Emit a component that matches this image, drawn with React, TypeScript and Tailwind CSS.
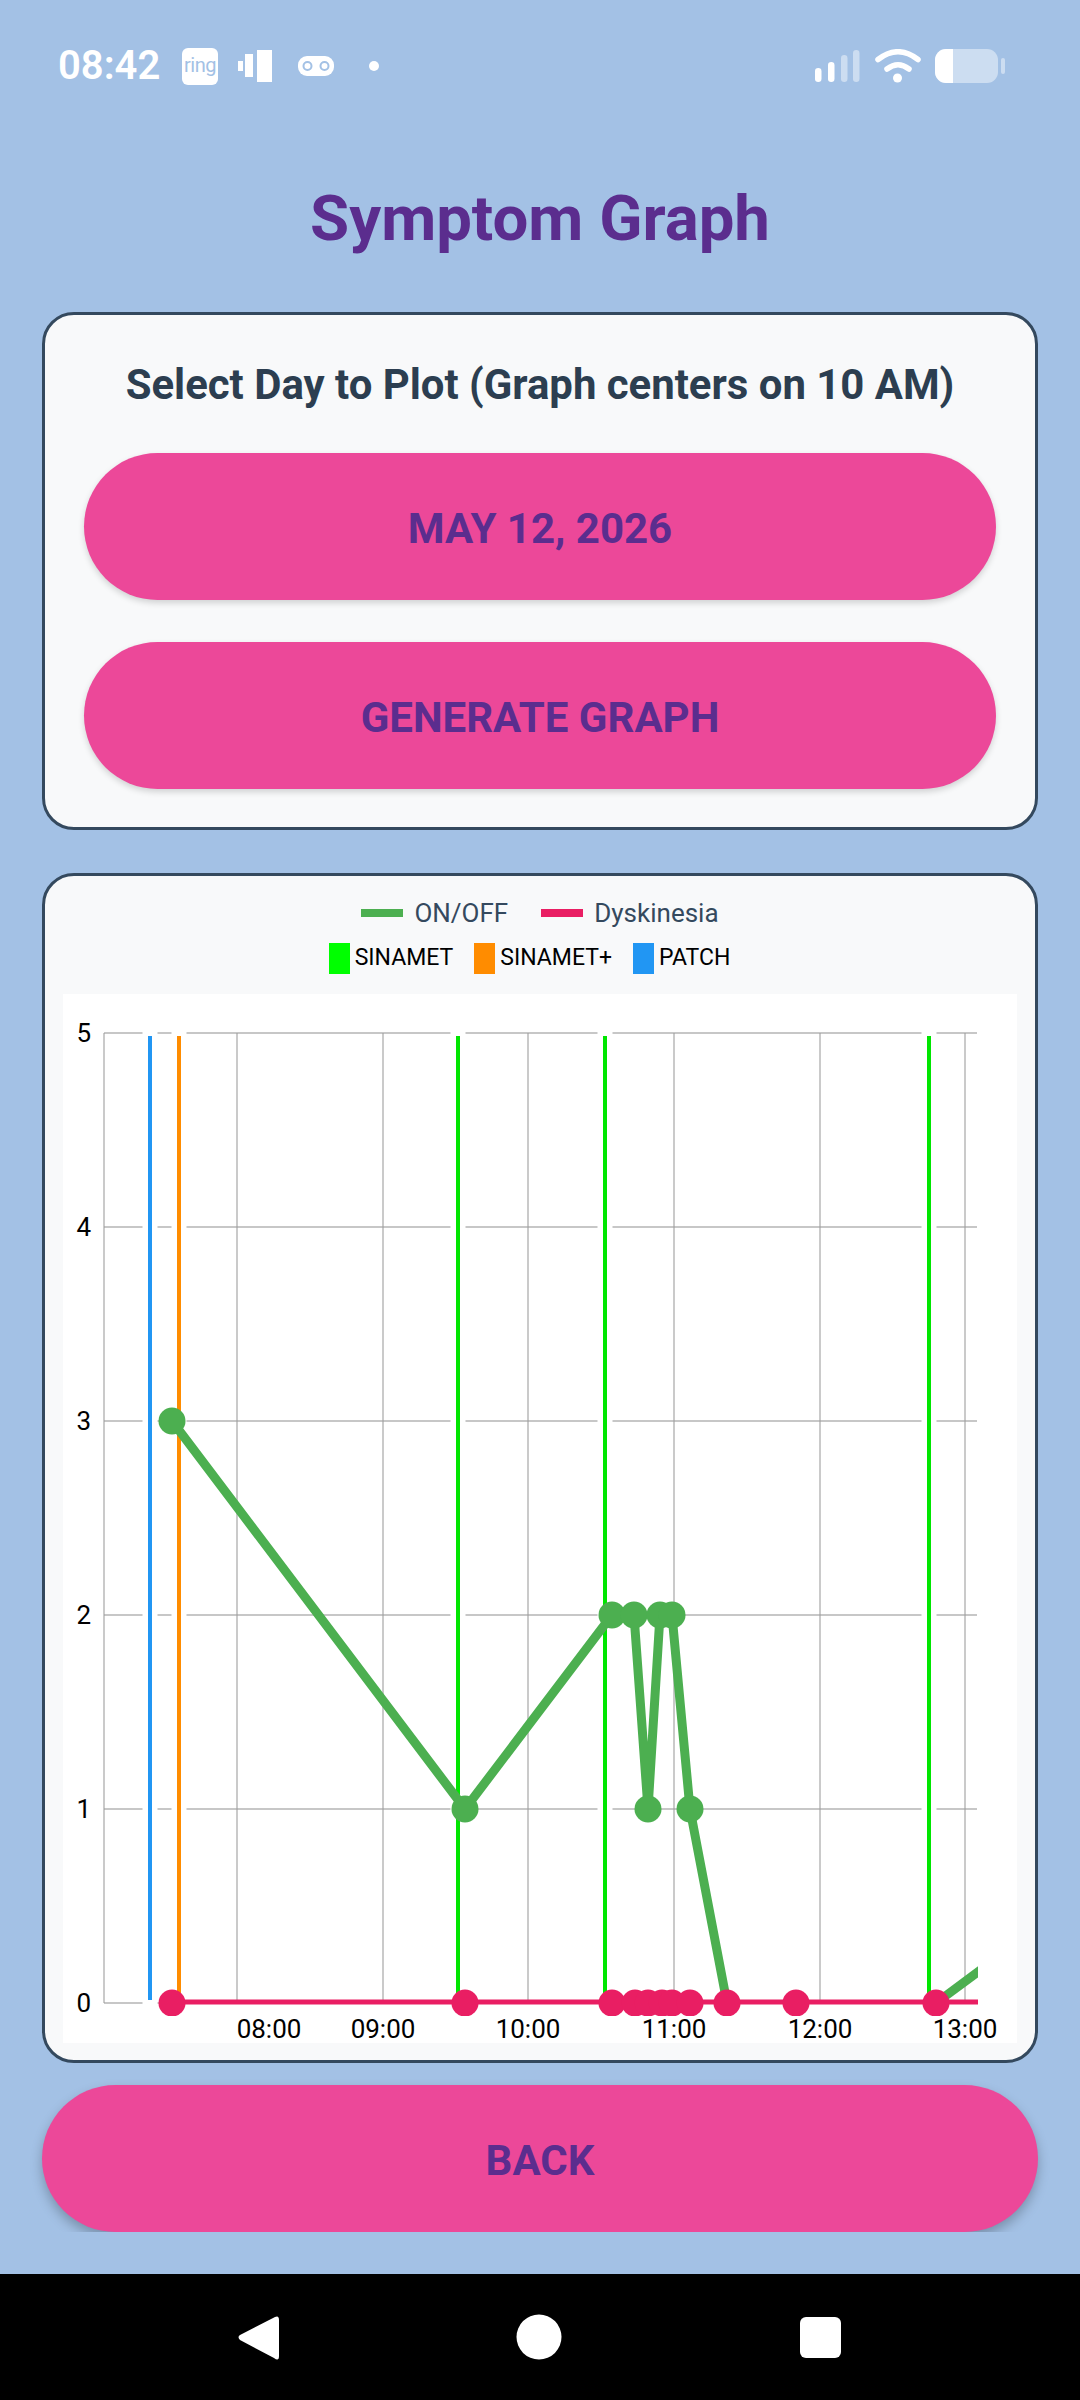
const FONT = 'font-["Roboto",sans-serif]';

const H_GRID = [1033, 1227, 1421, 1615, 1809, 2003];
const V_GRID = [104, 237, 383, 528, 674, 820, 965];
const MED_LINES = [
  { x: 150, color: '#2196f3' },
  { x: 179, color: '#ff8c00' },
  { x: 458, color: '#00e600' },
  { x: 605, color: '#00e600' },
  { x: 929, color: '#00e600' },
];
const ON_OFF: [number, number][] = [
  [172, 1421], [465, 1809], [612, 1615], [634, 1615], [648, 1809], [660, 1615], [672, 1615], [690, 1809], [727, 2003],
];
const DYSK_X = [172, 465, 612, 635, 648, 662, 672, 690, 727, 796, 936];
const Y_LABELS = ['5', '4', '3', '2', '1', '0'];
const X_LABELS = [
  { x: 269, t: '08:00' },
  { x: 383, t: '09:00' },
  { x: 528, t: '10:00' },
  { x: 674, t: '11:00' },
  { x: 820, t: '12:00' },
  { x: 965, t: '13:00' },
];

const Chart = () => (
  <svg viewBox="63 994 954 1049" className="block w-[954px] h-[1049px] bg-white">
    <defs>
      <clipPath id="plot">
        <rect x="100" y="1020" width="878" height="996" />
      </clipPath>
    </defs>
    {H_GRID.map((y) => (
      <line key={y} x1="104" x2="977" y1={y} y2={y} stroke="#909090" strokeWidth="1.1" />
    ))}
    {V_GRID.map((x) => (
      <line key={x} x1={x} x2={x} y1="1033" y2="2003" stroke="#9e9e9e" strokeWidth="1.1" />
    ))}
    {MED_LINES.map((m) => (
      <g key={m.x}>
        <line x1={m.x} x2={m.x} y1="1031" y2="2005" stroke="#fff" strokeWidth="15" />
        <line x1={m.x} x2={m.x} y1="1036" y2="2000" stroke={m.color} strokeWidth="4" />
      </g>
    ))}
    <g clipPath="url(#plot)">
      <polyline
        points={ON_OFF.map((p) => p.join(',')).join(' ')}
        fill="none"
        stroke="#4caf50"
        strokeWidth="9"
        strokeLinejoin="round"
      />
      <line x1="936" y1="2003" x2="990" y2="1963" stroke="#4caf50" strokeWidth="9" />
      {ON_OFF.slice(0, 8).map(([x, y]) => (
        <circle key={x} cx={x} cy={y} r="13.5" fill="#4caf50" />
      ))}
      <line x1="172" x2="978" y1="2002" y2="2002" stroke="#e91e63" strokeWidth="5" />
      {DYSK_X.map((x) => (
        <circle key={x} cx={x} cy="2003" r="13.5" fill="#e91e63" />
      ))}
    </g>
    <g fontFamily="Roboto, sans-serif" fill="#000">
      {Y_LABELS.map((t, i) => (
        <text key={t} x="91" y={H_GRID[i] + 9} textAnchor="end" fontSize="26">
          {t}
        </text>
      ))}
      {X_LABELS.map((l) => (
        <text key={l.t} x={l.x} y="2038" textAnchor="middle" fontSize="26">
          {l.t}
        </text>
      ))}
    </g>
  </svg>
);

const StatusBar = () => (
  <div className="flex items-center justify-between h-[132px] pl-[58px] pr-[75px] shrink-0">
    <div className="flex items-center">
      <span className="text-[40px] font-semibold text-white w-[124px]">08:42</span>
      <div className="flex items-center justify-center w-[36px] h-[37px] rounded-[6px] bg-white text-[20px] tracking-[-0.5px] text-[#a3c1e5] leading-none pb-[2px]">
        ring
      </div>
      <svg viewBox="0 0 34 32" className="w-[34px] h-[32px] ml-[20px]" fill="#fff">
        <rect x="0" y="11" width="5" height="10" />
        <rect x="7" y="4" width="8" height="23" />
        <rect x="19" y="0" width="15" height="32" />
      </svg>
      <svg viewBox="0 0 36 20" className="w-[36px] h-[20px] ml-[26px]">
        <rect x="0" y="0" width="36" height="20" rx="9" fill="#fff" />
        <circle cx="9.5" cy="10" r="4" fill="none" stroke="#a3c1e5" strokeWidth="2" />
        <circle cx="26.5" cy="10" r="4" fill="none" stroke="#a3c1e5" strokeWidth="2" />
      </svg>
      <div className="w-[10px] h-[10px] rounded-full bg-white ml-[35px]" />
    </div>
    <svg viewBox="815 49 190 34" className="w-[190px] h-[34px]" fill="#fff">
      <rect x="815" y="68" width="6.5" height="14" rx="3.2" />
      <rect x="828" y="62" width="6.5" height="20" rx="3.2" />
      <rect x="841" y="55" width="6.5" height="27" rx="3.2" opacity="0.45" />
      <rect x="853" y="50" width="6.5" height="32" rx="3.2" opacity="0.45" />
      <path d="M878 59.5 Q898 44 918 59.5" fill="none" stroke="#fff" strokeWidth="5.5" strokeLinecap="round" />
      <path d="M887 69 Q898 60.5 909 69" fill="none" stroke="#fff" strokeWidth="5.5" strokeLinecap="round" />
      <circle cx="897.5" cy="78" r="4.5" />
      <rect x="935" y="49" width="63" height="34" rx="11" opacity="0.45" />
      <path d="M946 49 H953 V83 H946 A11 11 0 0 1 935 72 V60 A11 11 0 0 1 946 49 Z" />
      <rect x="1001" y="58" width="4" height="16" rx="2" opacity="0.45" />
    </svg>
  </div>
);

const PillButton = ({ label, className }: { label: string; className: string }) => (
  <button
    type="button"
    className={`flex items-center justify-center rounded-full bg-[#ec4899] pt-[3px] text-[42px] font-bold text-[#5b2d8e] ${className}`}
  >
    {label}
  </button>
);

const LineKey = ({ label, color }: { label: string; color: string }) => (
  <div className="flex items-center gap-[11px] text-[26px] text-[#34495e]">
    <div className={`w-[42px] h-[8px] ${color}`} />
    {label}
  </div>
);

const BoxKey = ({ label, color }: { label: string; color: string }) => (
  <div className="flex items-center gap-[5px] text-[23px] text-black">
    <div className={`w-[21px] h-[31px] ${color}`} />
    {label}
  </div>
);

export default function App() {
  return (
    <div className={`flex flex-col w-[1080px] h-[2400px] bg-[#a3c1e5] ${FONT}`}>
      <StatusBar />
      <div className="flex flex-col h-[2100px] overflow-hidden px-[42px]">
        <h1 className="h-[180px] pt-[49px] text-center text-[63.5px] font-bold leading-[75px] text-[#5b2d8e]">
          Symptom Graph
        </h1>

        <div className="flex flex-col h-[518px] rounded-[32px] border-[3px] border-[#34495e] bg-[#f8f9fa] px-[39px]">
          <h2 className="h-[138px] pt-[45px] text-center text-[41.9px] font-bold leading-[50px] text-[#2c3e50]">
            Select Day to Plot (Graph centers on 10 AM)
          </h2>
          <PillButton label="MAY 12, 2026" className="h-[147px] shrink-0 shadow-[0_3px_6px_rgba(0,0,0,0.16)]" />
          <PillButton label="GENERATE GRAPH" className="h-[147px] mt-[42px] shrink-0 shadow-[0_3px_6px_rgba(0,0,0,0.16)]" />
        </div>

        <div className="flex flex-col h-[1190px] mt-[43px] rounded-[32px] border-[3px] border-[#34495e] bg-[#f8f9fa] overflow-hidden shrink-0">
          <div className="flex items-center justify-center gap-[33px] h-[54px] pt-[20px]">
            <LineKey label="ON/OFF" color="bg-[#4caf50]" />
            <LineKey label="Dyskinesia" color="bg-[#e91e63]" />
          </div>
          <div className="flex items-center justify-center gap-[21px] h-[52px] pt-[4px] pr-[21px]">
            <BoxKey label="SINAMET" color="bg-[#00ff00]" />
            <BoxKey label="SINAMET+" color="bg-[#ff8c00]" />
            <BoxKey label="PATCH" color="bg-[#2196f3]" />
          </div>
          <div className="pt-[12px] pl-[18px]">
            <Chart />
          </div>
        </div>

        <PillButton label="BACK" className="h-[147px] mt-[22px] shrink-0 shadow-[0_6px_12px_rgba(0,0,0,0.25)]" />
      </div>

      <div className="flex items-center h-[126px] mt-auto bg-black">
        <svg viewBox="0 0 1080 126" className="w-[1080px] h-[126px]" fill="#fff">
          <path d="M275 43 Q279 41 279 46 V82 Q279 88 274 84 L240 66 Q237 63 240 61 Z" />
          <circle cx="539" cy="63" r="22.5" />
          <rect x="800" y="43" width="41" height="41" rx="6" />
        </svg>
      </div>
    </div>
  );
}
